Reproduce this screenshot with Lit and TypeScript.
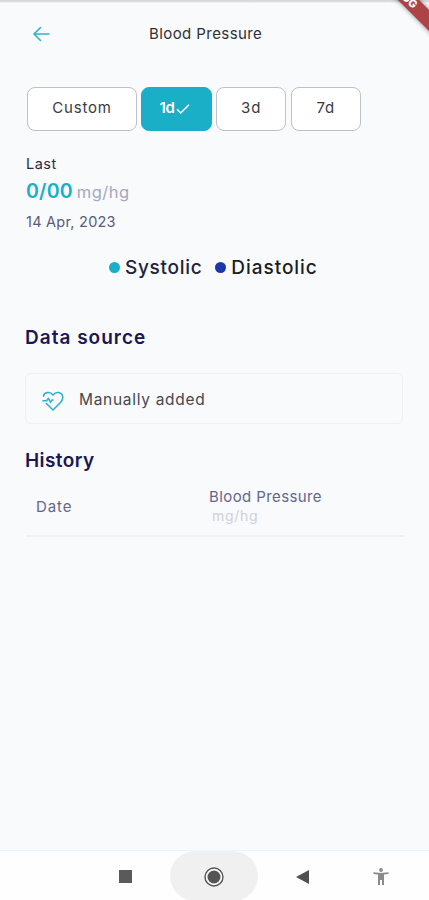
import { LitElement, html, css } from "lit";
import { customElement, property } from "lit/decorators.js";
import { classMap } from "lit/directives/class-map.js";

@customElement("range-chip")
class RangeChip extends LitElement {
  @property() label = "";
  @property({ type: Boolean }) selected = false;

  static styles = css`
    :host { display: block; }
    .chip {
      box-sizing: border-box;
      width: 100%;
      height: 44px;
      display: flex;
      align-items: center;
      justify-content: center;
      gap: 2px;
      border: 1px solid #bfc1ca;
      border-radius: 8px;
      background: #fff;
      color: #3a3b42;
      font: 400 15px/20px Inter, "Open Sans", sans-serif;
      letter-spacing: 0.85px;
      padding-bottom: 2px;
    }
    .selected {
      background: #1aaec7;
      border-color: #1aaec7;
      color: #fff;
      font-weight: 600;
      letter-spacing: -0.4px;
      padding-right: 3px;
    }
    svg { display: block; margin-top: 2px; }
  `;

  render() {
    return html`<div class=${classMap({ chip: true, selected: this.selected })}>
      <span>${this.label}</span>
      ${this.selected
        ? html`<svg width="14" height="12" viewBox="0 0 14 12" fill="none">
            <path d="M1 6.3 4.8 10 13 1.8" stroke="#fff" stroke-width="1.6" />
          </svg>`
        : null}
    </div>`;
  }
}

@customElement("app-root")
class AppRoot extends LitElement {
  static styles = css`
    :host {
      display: flex;
      flex-direction: column;
      position: relative;
      box-sizing: border-box;
      width: 429px;
      height: 900px;
      overflow: hidden;
      background: #f8fafc;
      color: #33343b;
      font-family: Inter, "Open Sans", sans-serif;
      white-space: nowrap;
    }
    svg { display: block; flex: none; }
    .status { height: 3px; background: linear-gradient(#d4d5d7, #dfe0e2 60%, #f8fafc); }
    .bar { height: 60px; display: grid; grid-template-columns: 149px auto; align-items: center; }
    .back { margin-left: 33px; margin-top: 2px; }
    .title { font-size: 15px; letter-spacing: 0.42px; color: #2f3036; }
    .ranges { display: grid; grid-template-columns: 110px 70.5px 70.5px 70.5px; gap: 4.2px; margin: 24px 0 0 27px; }
    .latest { margin: 22px 0 0 26px; }
    .last { font-size: 14.5px; line-height: 22px; letter-spacing: 0.5px; color: #2b2a45; }
    .reading { display: flex; align-items: baseline; gap: 4px; height: 30px; line-height: 30px; margin-top: 1px; }
    .value { font-size: 19.5px; font-weight: 600; color: #1aaec7; letter-spacing: 0.2px; }
    .unit { font-size: 16.5px; color: #a5a7bd; letter-spacing: 0.5px; }
    .date { font-size: 14.5px; line-height: 28px; letter-spacing: 0.25px; color: #5b5b7c; margin-top: 2px; }
    .legend { display: flex; gap: 13px; margin: 17px 0 0 109px; height: 28px; }
    .key { display: flex; align-items: center; gap: 5px; font-size: 19px; font-weight: 500; color: #22223a; letter-spacing: 0.7px; }
    .dot { width: 11px; height: 11px; border-radius: 50%; background: #1aaec7; margin-top: 1px; }
    .dia { color: #1c1d22; letter-spacing: 0.95px; }
    .dia .dot { background: #1b37ac; }
    .heading { margin: 0 0 0 25px; font-size: 19px; line-height: 28px; font-weight: 600; color: #1b1755; letter-spacing: 0.4px; }
    .source-title { margin-top: 43px; letter-spacing: 1px; }
    .source {
      box-sizing: border-box;
      width: 378px;
      height: 51px;
      margin: 21px 0 0 25px;
      padding: 0 0 0 16px;
      display: flex;
      align-items: center;
      gap: 15px;
      border: 1px solid #eff0f3;
      border-radius: 6px;
    }
    .source svg { margin-top: 4px; }
    .source-name { font-size: 15.5px; letter-spacing: 0.7px; color: #47474f; margin-top: 1px; }
    .history-title { margin-top: 23px; }
    .table {
      box-sizing: border-box;
      width: 378px;
      height: 62px;
      margin: 0 0 0 26px;
      padding-top: 2px;
      display: grid;
      grid-template-columns: 183px auto;
      align-items: center;
      border-bottom: 2px solid #f0f1f4;
      font-size: 15px;
      color: #64678a;
      letter-spacing: 0.4px;
    }
    .date-col { padding-left: 10px; letter-spacing: 0.9px; }
    .bp-col { line-height: 20px; }
    .sub { font-size: 14px; line-height: 18px; color: #cfd0d9; padding-left: 3px; letter-spacing: 0.7px; }
    .spacer { flex: 1; }
    .nav {
      box-sizing: border-box;
      height: 50px;
      border-top: 1px solid #f1f2f4;
      background: #fefefe;
      display: grid;
      grid-template-columns: 89px 88px 88px 70px;
      padding-left: 81px;
      align-items: center;
      justify-items: center;
    }
    .home { width: 88px; height: 50px; border-radius: 25px; background: #f0f0f0; display: grid; place-items: center; }
    .home svg { margin-top: 1px; }
    .nav > svg { margin-top: 1px; }
    .banner {
      position: absolute;
      left: 358px;
      top: -8px;
      width: 100px;
      height: 15px;
      transform: rotate(45deg);
      background: #ad4345;
      box-shadow: 0 0 5px rgba(0, 0, 0, 0.45);
      color: #fff;
      font-size: 11px;
      line-height: 15px;
      font-weight: 800;
      box-sizing: border-box;
      padding-left: 22px;
    }
  `;

  render() {
    return html`
      <div class="status"></div>
      <header class="bar">
        <svg class="back" width="17" height="16" viewBox="0 0 17 16" fill="none" stroke="#30b3cb" stroke-width="1.6" stroke-linecap="round" stroke-linejoin="round">
          <path d="M7.500 1.500 1 8l6.500 6.500M1 8h15" />
        </svg>
        <span class="title">Blood Pressure</span>
      </header>
      <section class="ranges">
        <range-chip label="Custom"></range-chip>
        <range-chip label="1d" selected></range-chip>
        <range-chip label="3d"></range-chip>
        <range-chip label="7d"></range-chip>
      </section>
      <section class="latest">
        <div class="last">Last</div>
        <div class="reading"><span class="value">0/00</span><span class="unit">mg/hg</span></div>
        <div class="date">14 Apr, 2023</div>
      </section>
      <div class="legend">
        <div class="key"><i class="dot"></i><span>Systolic</span></div>
        <div class="key dia"><i class="dot"></i><span>Diastolic</span></div>
      </div>
      <h2 class="heading source-title">Data source</h2>
      <div class="source">
        <svg width="22" height="20" viewBox="0 0 22 20" fill="none" stroke="#2ab1c9" stroke-width="1.5" stroke-linecap="round" stroke-linejoin="round">
          <path d="M1.5 5.2C2.3 1 8 .1 11 4c3-4 8.400-3 9.500.8 1 3.200-.7 5.400-2.500 7.200l-7 7-6.600-6.500" />
          <path d="M1 9.800h3.600L6.500 7.300l2 4.200 1.400-2.500 1.200 0" />
        </svg>
        <span class="source-name">Manually added</span>
      </div>
      <h2 class="heading history-title">History</h2>
      <div class="table">
        <div class="date-col">Date</div>
        <div class="bp-col"><div>Blood Pressure</div><div class="sub">mg/hg</div></div>
      </div>
      <div class="spacer"></div>
      <nav class="nav">
        <svg width="13" height="13" viewBox="0 0 13 13"><rect width="13" height="13" fill="#5a5a5a" /></svg>
        <div class="home">
          <svg width="20" height="20" viewBox="0 0 20 20">
            <circle cx="10" cy="10" r="9" fill="#fafafa" stroke="#555" stroke-width="1.4" />
            <circle cx="10" cy="10" r="6.500" fill="#555" />
          </svg>
        </div>
        <svg width="13" height="14" viewBox="0 0 13 14"><path d="M0 7 13 0v14z" fill="#505050" /></svg>
        <svg width="16" height="17" viewBox="0 0 16 17" fill="#8a8a8a">
          <circle cx="8" cy="2" r="1.900" />
          <path d="M.5 4.300 8 5l7.500-.7v1.600l-4.500.6V17H9v-5H7v5H5V6.500L.5 5.900z" />
        </svg>
      </nav>
      <div class="banner">DEBUG</div>
    `;
  }
}
